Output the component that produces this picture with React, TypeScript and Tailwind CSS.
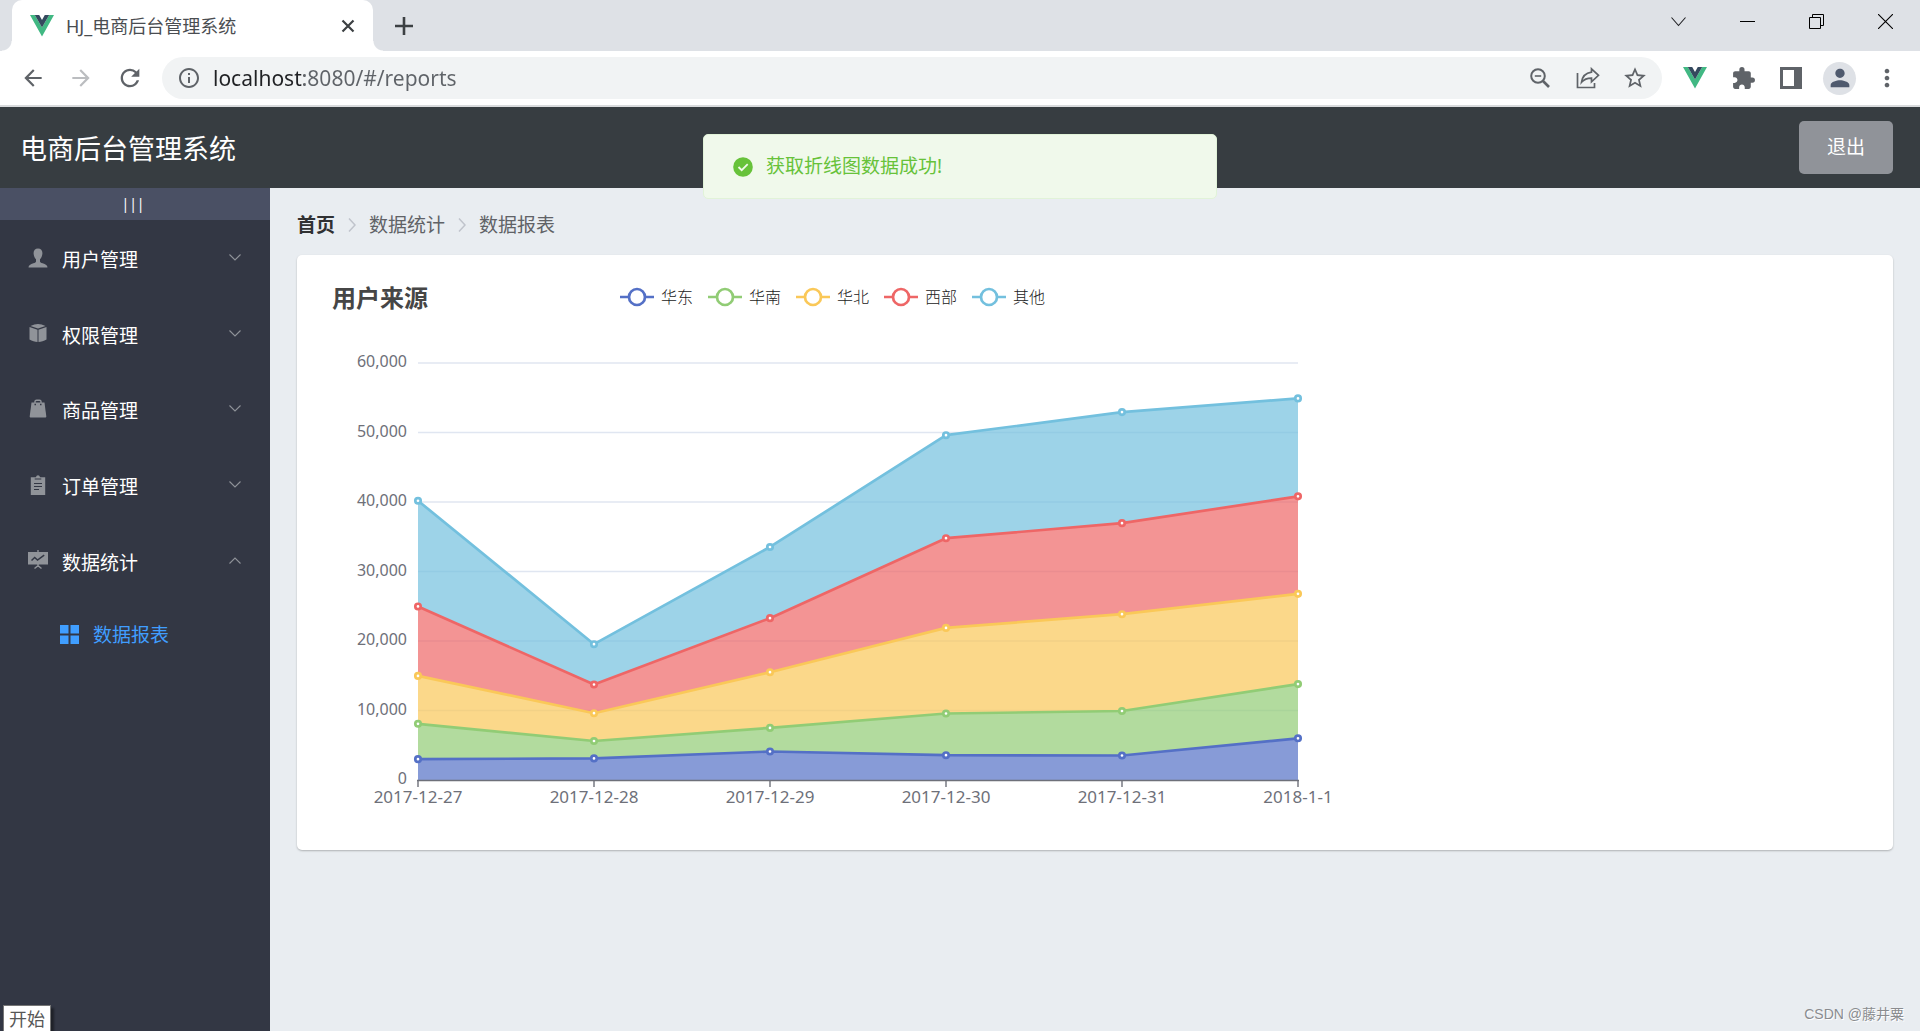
import type { ReactNode } from "react";
import {
  MdArrowBack,
  MdArrowForward,
  MdExtension,
  MdInfoOutline,
  MdMoreVert,
  MdPerson,
  MdRefresh,
  MdStarBorder,
} from "react-icons/md";

const dates = ["2017-12-27", "2017-12-28", "2017-12-29", "2017-12-30", "2017-12-31", "2018-1-1"];

const series = [
  { name: "华东", color: "#5470c6", data: [2999, 3111, 4100, 3565, 3528, 6000] },
  { name: "华南", color: "#91cc75", data: [5090, 2500, 3400, 6000, 6400, 7800] },
  { name: "华北", color: "#fac858", data: [6888, 4000, 8010, 12321, 13928, 12984] },
  { name: "西部", color: "#ee6666", data: [9991, 4130, 7777, 12903, 13098, 14028] },
  { name: "其他", color: "#73c0de", data: [15212, 5800, 10241, 14821, 15982, 14091] },
];

const plot = { left: 94, right: 974, top: 49, bottom: 466, max: 60000 };
const ticks = [0, 10000, 20000, 30000, 40000, 50000, 60000];

const xAt = (i: number) => plot.left + ((plot.right - plot.left) * i) / (dates.length - 1);
const yAt = (v: number) => plot.bottom - ((plot.bottom - plot.top) * v) / plot.max;

// Each series sits on top of the sum of the ones before it
const stacked = series.map((item, s) => ({
  ...item,
  lower: dates.map((_, i) => series.slice(0, s).reduce((sum, p) => sum + p.data[i], 0)),
  upper: dates.map((_, i) => series.slice(0, s + 1).reduce((sum, p) => sum + p.data[i], 0)),
}));

function VueLogo() {
  return (
    <svg width="24" height="22" viewBox="0 0 24 22" aria-hidden="true">
      <path d="M0 0h4.8L12 12.400 19.200 0H24L12 21.500z" fill="#41b883" />
      <path d="M4.800 0h4.400L12 5 14.800 0h4.400L12 12.400z" fill="#34495e" />
    </svg>
  );
}

function UserIcon() {
  return (
    <svg width="20" height="20" viewBox="0 0 20 20" fill="#909399">
      <path d="M10 0.500c3 0 4.600 2 4.400 5-.2 2.500-1 4.500-2.400 5.700v2.200c0 .8 1 1.200 2.600 1.800 3 1 4.900 2 4.900 4.300H.5c0-2.300 1.900-3.300 4.900-4.300C7 14.600 8 14.200 8 13.400v-2.200C6.600 10 5.800 8 5.600 5.500 5.400 2.500 7 .5 10 .5z" />
    </svg>
  );
}

function BoxIcon() {
  return (
    <svg width="20" height="20" viewBox="0 0 20 20" fill="#909399">
      <path d="M10 1c2.300 0 5 .8 7.500 2L10 5.600 2.500 3C5 1.800 7.700 1 10 1z" />
      <path d="M1.500 4l8 2.700V19c-2.500-.3-5.500-1.100-8-2.500zM18.500 4l-8 2.700V19c2.500-.3 5.500-1.100 8-2.500z" />
    </svg>
  );
}

function BagIcon() {
  return (
    <svg width="20" height="20" viewBox="0 0 20 20">
      <path d="M7 4V2.500C7 1.700 7.700 1.200 8.500 1.200h3c.8 0 1.500.5 1.500 1.300V4" fill="none" stroke="#909399" strokeWidth="1.400" />
      <path d="M3.500 3.600h13l1.800 13.800c0 .6-.5 1-1 1H2.700c-.5 0-1-.4-1-1z" fill="#909399" />
      <path d="M6.500 5.500H8M12 5.500h1.500" stroke="#333744" strokeWidth="1.400" />
    </svg>
  );
}

function ClipboardIcon() {
  return (
    <svg width="20" height="20" viewBox="0 0 20 20">
      <path d="M7 2.200h1C8.200.9 9 .2 10 .2s1.800.7 2 2h5.200V20H2.800V2.200z" fill="#909399" />
      <path d="M6.700 4h6.600M6 8.500h8M6 11.500h8M6 14.500h5" stroke="#333744" strokeWidth="1.200" />
    </svg>
  );
}

function BoardIcon() {
  return (
    <svg width="20" height="20" viewBox="0 0 20 20">
      <path d="M9.300 0h1.400v2H20v12.500H0V2h9.300z" fill="#909399" />
      <path d="M3.500 10.500l3.200-3 2.800 2.600 6.700-5" fill="none" stroke="#333744" strokeWidth="1.500" />
      <path d="M10 14v2M6.500 18.500L10 15.700l3.500 2.800" fill="none" stroke="#909399" strokeWidth="1.500" />
    </svg>
  );
}

const menus: { label: string; icon: ReactNode; open?: boolean }[] = [
  { label: "用户管理", icon: <UserIcon /> },
  { label: "权限管理", icon: <BoxIcon /> },
  { label: "商品管理", icon: <BagIcon /> },
  { label: "订单管理", icon: <ClipboardIcon /> },
  { label: "数据统计", icon: <BoardIcon />, open: true },
];

function TabStrip() {
  return (
    <div className="flex h-[51px] bg-[#dee1e6]">
      <span className="ml-0.5 h-2.5 w-2.5 self-end bg-[radial-gradient(circle_at_0_0,transparent_9px,#ffffff_10px)]" />
      <div className="flex w-[361px] items-center rounded-t-[10px] bg-white pr-4 pl-[18px]">
        <VueLogo />
        <span className="ml-3 flex-1 text-lg leading-none text-[#4a4d51]">HJ_电商后台管理系统</span>
        <button aria-label="Close tab" className="p-0.5">
          <svg width="14" height="14" viewBox="0 0 14 14" stroke="#3c4043" strokeWidth="2.200">
            <path d="M1.500 1.500l11 11M12.500 1.500l-11 11" />
          </svg>
        </button>
      </div>
      <span className="h-2.5 w-2.5 self-end bg-[radial-gradient(circle_at_100%_0,transparent_9px,#ffffff_10px)]" />
      <button aria-label="New tab" className="ml-3">
        <svg width="18" height="18" viewBox="0 0 18 18" stroke="#3c4043" strokeWidth="2.600">
          <path d="M9 0v18M0 9h18" />
        </svg>
      </button>
      <div className="ml-auto flex h-[43px] items-center gap-[54px] pr-[27px]">
        <button aria-label="Search tabs">
          <svg width="15" height="15" viewBox="0 0 15 15" fill="none" stroke="#202124" strokeWidth="1.100">
            <path d="M0.500 3.500l7 8 7-8" />
          </svg>
        </button>
        <button aria-label="Minimize">
          <svg width="15" height="15" viewBox="0 0 15 15" stroke="#000000">
            <path d="M0 7.500h15" />
          </svg>
        </button>
        <button aria-label="Restore">
          <svg width="15" height="15" viewBox="0 0 15 15" fill="none" stroke="#000000">
            <path d="M0.500 3.500h11v11h-11zM3.500 3.500v-3h11v11h-3" />
          </svg>
        </button>
        <button aria-label="Close window">
          <svg width="15" height="15" viewBox="0 0 15 15" stroke="#000000" strokeWidth="1.100">
            <path d="M0 0l15 15M15 0L0 15" />
          </svg>
        </button>
      </div>
    </div>
  );
}

function Toolbar() {
  return (
    <div className="flex h-14 items-center border-b-2 border-[#d9dbdd] bg-white pr-[19px] pl-5 text-[#5f6368]">
      <button aria-label="Back" className="mr-[22px]">
        <MdArrowBack size={26} />
      </button>
      <button aria-label="Forward" className="mr-[22px] text-[#bbbdc0]">
        <MdArrowForward size={26} />
      </button>
      <button aria-label="Reload" className="mr-[18px]">
        <MdRefresh size={28} />
      </button>
      <div className="flex h-[42px] flex-1 items-center rounded-full bg-[#f1f3f4] pr-3.5 pl-[15px]">
        <MdInfoOutline size={24} />
        <input
          type="text"
          aria-label="Address"
          defaultValue="localhost:8080/#/reports"
          className="ml-3 min-w-0 flex-1 bg-[linear-gradient(to_right,#202124_91px,#5f6368_91px)] bg-clip-text pt-0.5 text-[21px] text-transparent outline-none"
        />
        <button aria-label="Zoom" className="mr-[26px]">
          <svg width="20" height="20" viewBox="0 0 20 20" fill="none" stroke="#5f6368" strokeWidth="2">
            <circle cx="8" cy="8" r="6.800" />
            <path d="M13 13l6 6" strokeWidth="2.600" />
            <path d="M4.800 8h6.400" strokeWidth="1.600" />
          </svg>
        </button>
        <button aria-label="Share" className="mr-[22px]">
          <svg width="24" height="22" viewBox="0 0 24 22" fill="none" stroke="#5f6368" strokeWidth="1.700">
            <path d="M1.500 6v14.500h17V16" />
            <path d="M15.500 1.800l7 6.500-7 6.500v-3.600c-4.500 0-7.500 1.200-10 4.100.7-5.300 4-9.400 10-10.200z" />
          </svg>
        </button>
        <button aria-label="Bookmark">
          <MdStarBorder size={26} />
        </button>
      </div>
      <button aria-label="Vue devtools" className="ml-[21px]">
        <VueLogo />
      </button>
      <button aria-label="Extensions" className="ml-6">
        <MdExtension size={25} />
      </button>
      <button aria-label="Side panel" className="ml-6">
        <svg width="22" height="22" viewBox="0 0 22 22" fill="#5f6368">
          <path fillRule="evenodd" d="M0 0h22v22H0zM3 3v16h11V3z" />
        </svg>
      </button>
      <button aria-label="Profile" className="ml-[21px] flex size-[33px] items-center justify-center rounded-full bg-[#dee1e6] text-[#4f5a6e]">
        <MdPerson size={28} />
      </button>
      <button aria-label="Menu" className="ml-[17px]">
        <MdMoreVert size={28} />
      </button>
    </div>
  );
}

function Chevron({ up }: { up?: boolean }) {
  return (
    <svg width="12" height="7" viewBox="0 0 12 7" fill="none" stroke="#909399" strokeWidth="1.100">
      <path d={up ? "M0.500 6.500L6 1l5.500 5.500" : "M0.500 0.500L6 6l5.500-5.500"} />
    </svg>
  );
}

function Sidebar() {
  return (
    <aside className="w-[270px] shrink-0 bg-[#333744]">
      <button className="block h-8 w-full bg-[#4a5064] pr-1 text-center text-sm leading-8 text-white">|||</button>
      <nav>
        <ul className="grid h-[378px] grid-rows-5">
          {menus.map((menu) => (
            <li key={menu.label}>
              <button aria-expanded={!!menu.open} className="flex h-full w-full items-center pr-[29px] pl-7 text-left">
                {menu.icon}
                <span className="ml-3.5 flex-1 pt-1.5 text-[19px] leading-none text-white">{menu.label}</span>
                <Chevron up={menu.open} />
              </button>
            </li>
          ))}
        </ul>
        <a href="#/reports" className="flex h-[68px] items-center pt-1 pl-[60px] text-[#409eff]">
          <svg width="19" height="19" viewBox="0 0 19 19" fill="#409eff">
            <path d="M0 0h8.500v8.500H0zM10.500 0H19v8.500h-8.500zM0 10.500h8.500V19H0zM10.500 10.500H19V19h-8.500z" />
          </svg>
          <span className="ml-3.5 pt-0.5 text-[19px] leading-none">数据报表</span>
        </a>
      </nav>
    </aside>
  );
}

function Separator() {
  return (
    <svg width="8" height="14" viewBox="0 0 8 14" fill="none" stroke="#c0c4cc" strokeWidth="1.500" className="mx-[13px]">
      <path d="M1 0.500L7 7l-6 6.500" />
    </svg>
  );
}

function ReportChart() {
  return (
    <div className="w-[1013px] max-w-full">
      <div className="grid h-8 grid-cols-[1fr_auto_1fr] items-center">
        <h2 className="pl-2 text-2xl leading-none font-bold text-[#464646]">用户来源</h2>
        <ul className="flex gap-[15px] pb-0.5 pl-1">
          {series.map((item) => (
            <li key={item.name} className="flex items-center gap-[7px] text-base leading-none font-light text-[#222222]">
              <svg width="34" height="20" viewBox="0 0 34 20" stroke={item.color} strokeWidth="2.700">
                <path d="M0 10h34" />
                <circle cx="17" cy="10" r="8" fill="#ffffff" />
              </svg>
              {item.name}
            </li>
          ))}
        </ul>
      </div>
      <svg viewBox="0 0 1013 508" className="w-full overflow-visible" role="img" aria-label="用户来源">
        {ticks.map((t) => (
          <g key={t}>
            {t > 0 && <path d={`M${plot.left} ${yAt(t)}H${plot.right}`} stroke="#e0e6f1" strokeWidth="1.400" />}
            <text x="83" y={yAt(t) + 4} textAnchor="end" fontSize="16" fill="#6e7079">
              {t.toLocaleString("en-US")}
            </text>
          </g>
        ))}
        {stacked.map((s) => {
          const top = s.upper.map((v, i) => `${xAt(i)},${yAt(v)}`);
          const base = s.lower.map((v, i) => `${xAt(i)},${yAt(v)}`).reverse();
          return <polygon key={s.name} points={[...top, ...base].join(" ")} fill={s.color} fillOpacity="0.700" />;
        })}
        <path d={`M${plot.left - 1} ${plot.bottom + 0.5}H${plot.right + 1}`} stroke="#6e7079" strokeWidth="1.400" />
        {dates.map((d, i) => (
          <g key={d}>
            <path d={`M${xAt(i)} ${plot.bottom}v7`} stroke="#6e7079" strokeWidth="1.400" />
            <text x={xAt(i)} y="489" textAnchor="middle" fontSize="17" fill="#6e7079">
              {d}
            </text>
          </g>
        ))}
        {stacked.map((s) => (
          <g key={s.name} stroke={s.color} strokeWidth="2.700">
            <polyline points={s.upper.map((v, i) => `${xAt(i)},${yAt(v)}`).join(" ")} fill="none" strokeLinejoin="bevel" />
            {s.upper.map((v, i) => (
              <circle key={i} cx={xAt(i)} cy={yAt(v)} r="2.700" fill="#ffffff" />
            ))}
          </g>
        ))}
      </svg>
    </div>
  );
}

export default function App() {
  return (
    <div className="relative flex min-h-screen flex-col overflow-hidden font-[family-name:'Noto_Sans','Noto_Sans_CJK_SC',sans-serif]">
      <TabStrip />
      <Toolbar />

      <header className="relative flex h-[81px] items-center justify-between bg-[#373d41] pr-[27px] pl-5">
        <h1 className="pt-0.5 text-[27px] leading-none text-white">电商后台管理系统</h1>
        <button className="h-[53px] rounded-[5px] bg-[#909399] px-7 text-[19px] leading-none text-white">退出</button>
        <div
          role="alert"
          className="absolute top-[27px] left-1/2 flex h-[65px] w-[514px] -translate-x-1/2 items-center rounded-[5px] border border-[#e1f3d8] bg-[#f0f9eb] px-7 text-[#67c23a]"
        >
          <svg width="22" height="22" viewBox="0 0 22 22">
            <circle cx="11" cy="11" r="9.800" fill="#67c23a" />
            <path d="M6.500 11l3.200 3.200 6-6" fill="none" stroke="#f0f9eb" strokeWidth="1.800" />
          </svg>
          <p className="ml-3 text-[19px] leading-none">获取折线图数据成功!</p>
        </div>
      </header>

      <div className="flex flex-1">
        <Sidebar />
        <main className="min-w-0 flex-1 bg-[#e9edf1] p-[27px]">
          <nav className="flex h-5 items-center text-[19px] leading-none text-[#606266]">
            <a href="#/home" className="font-bold text-[#303133]">首页</a>
            <Separator />
            <span>数据统计</span>
            <Separator />
            <span>数据报表</span>
          </nav>
          <section className="mt-5 rounded-[5px] bg-white px-[27px] pt-[27px] pb-7 shadow-[0_1px_2px_rgba(0,0,0,0.25)]">
            <ReportChart />
          </section>
        </main>
      </div>

      <div className="absolute bottom-0 left-[3px] h-[26px] border border-b-0 border-[#767676] bg-white px-[5px] pt-1 text-lg leading-none text-[#575757] shadow-[3px_3px_2px_rgba(0,0,0,0.4)]">
        开始
      </div>
      <div className="absolute right-4 bottom-2.5 font-[family-name:'Liberation_Sans','Noto_Sans_CJK_SC',sans-serif] text-sm leading-none text-[#8a8c8f] [text-shadow:1px_1px_0_#ffffff]">
        CSDN @藤井粟
      </div>
    </div>
  );
}
